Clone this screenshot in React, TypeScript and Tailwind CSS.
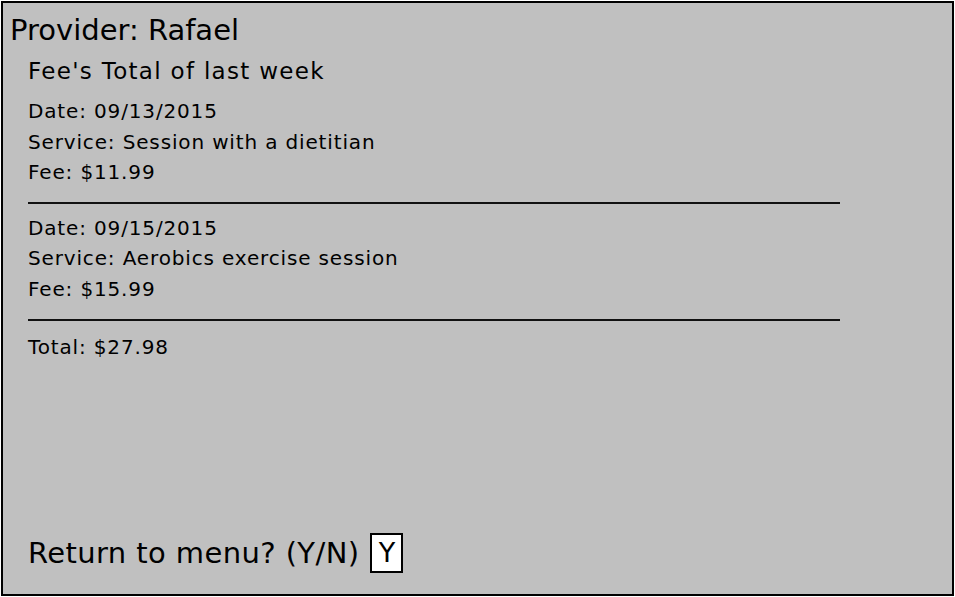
import React from "react";

type Entry = {
  date: string;
  service: string;
  fee: string;
};

const entries: Entry[] = [
  { date: "09/13/2015", service: "Session with a dietitian", fee: "$11.99" },
  { date: "09/15/2015", service: "Aerobics exercise session", fee: "$15.99" },
];

const App: React.FC = () => {
  return (
    <div className="w-[955px] h-[597px] bg-white p-px font-['DejaVu_Sans',sans-serif] text-black">
      <div className="w-[953px] h-[595px] border-2 border-black bg-[#c0c0c0] flex flex-col">
        <p className="pl-[7px] pt-[10px] text-[29px] leading-[34px]">Provider: Rafael</p>
        <div className="pl-[25px] flex flex-col">
          <p className="mt-[9px] text-[23px] leading-[30px] tracking-[1.3px]">Fee's Total of last week</p>
          <div className="w-[812px] mt-[10px] text-[20px] tracking-[0.85px]">
            {entries.map((e, i) => (
              <div
                key={e.date}
                className={
                  i === 0
                    ? "border-b-2 border-[#111] pb-[14px] mb-[9px] leading-[30.5px]"
                    : "border-b-2 border-[#111] pb-[15px] mb-[11px] leading-[30.5px]"
                }
              >
                <p>Date: {e.date}</p>
                <p>Service: {e.service}</p>
                <p>Fee: {e.fee}</p>
              </div>
            ))}
            <p className="leading-[30px]">Total: $27.98</p>
          </div>
        </div>
        <div className="mt-auto mb-[21px] pl-[25px] flex items-center gap-[11px]">
          <span className="text-[29px] leading-[40px] tracking-[0.4px]">Return to menu? (Y/N)</span>
          <span className="w-[33px] h-[40px] border-2 border-black bg-white flex items-center justify-center text-[27px]">
            Y
          </span>
        </div>
      </div>
    </div>
  );
};

export default App;
